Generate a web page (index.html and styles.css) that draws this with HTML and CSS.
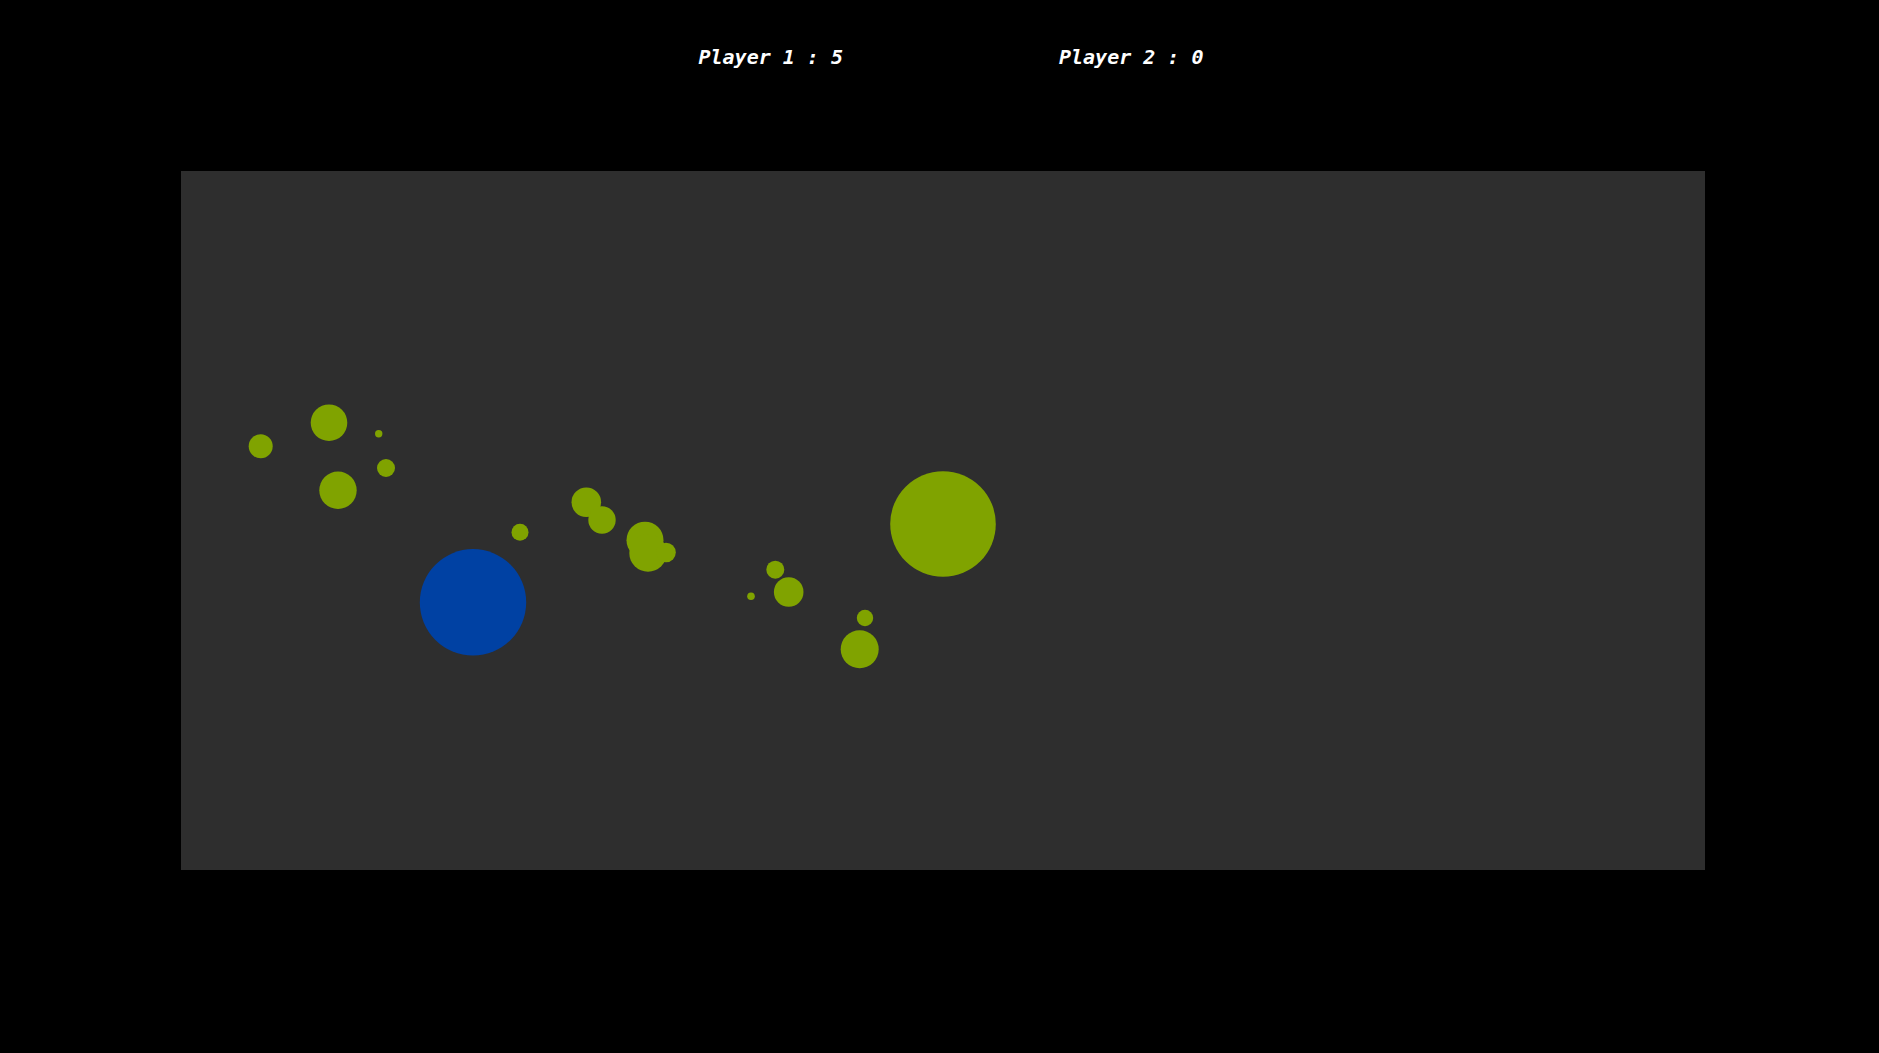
FILE: index.html
```html
<!DOCTYPE html>
<html lang="en">
<head>
    <meta charset="UTF-8">
    <meta name="viewport" content="width=device-width, initial-scale=1.0">
    <title>agar</title>
    <link rel="stylesheet" href="styles.css">
</head>
<body>
    <div class="scores">
        <p id="score1">Player 1 : 5</p>
        <p id="score2">Player 2 : 0</p>
    </div>
    <div class="board">
        <svg class="field" width="1524" height="699" viewBox="0 0 1524 699">
            <g class="food">
                <circle cx="79.7" cy="275.3" r="12"/>
                <circle cx="148" cy="251.7" r="18.3"/>
                <circle cx="197.7" cy="262.7" r="3.7"/>
                <circle cx="205" cy="297" r="9"/>
                <circle cx="157" cy="319.3" r="18.7"/>
                <circle cx="339" cy="361.3" r="8.5"/>
                <circle cx="405.3" cy="331.3" r="14.8"/>
                <circle cx="421" cy="349" r="13.7"/>
                <circle cx="464" cy="369.2" r="18.5"/>
                <circle cx="467" cy="382" r="18.7"/>
                <circle cx="485" cy="381.5" r="9.8"/>
                <circle cx="762" cy="353" r="52.8"/>
                <circle cx="594.3" cy="398.7" r="9"/>
                <circle cx="607.7" cy="421" r="14.8"/>
                <circle cx="570" cy="425.3" r="3.8"/>
                <circle cx="684" cy="447" r="8.2"/>
                <circle cx="678.7" cy="478.3" r="19"/>
            </g>
            <circle class="player" cx="292" cy="431.3" r="53.2"/>
        </svg>
    </div>
</body>
</html>
```

FILE: styles.css
```css
* {
  margin: 0;
  padding: 0;
  box-sizing: border-box;
}

body {
  background-color: #000;
  width: 100%;
  height: 100vh;
  overflow: hidden;
}

.scores {
  display: flex;
  justify-content: center;
  gap: 216px;
  padding: 45px 0 0 23px;
}

.scores p {
  color: #fff;
  font-family: 'DejaVu Sans Mono', 'Liberation Mono', monospace;
  font-size: 20px;
  line-height: 24px;
  font-weight: bold;
  font-style: italic;
}

.board {
  width: 1524px;
  height: 699px;
  margin: 102px 0 0 181px;
  background-color: #2e2e2e;
}

.field {
  display: block;
}

.food circle {
  fill: #80a300;
}

.player {
  fill: #0041a3;
}
```
